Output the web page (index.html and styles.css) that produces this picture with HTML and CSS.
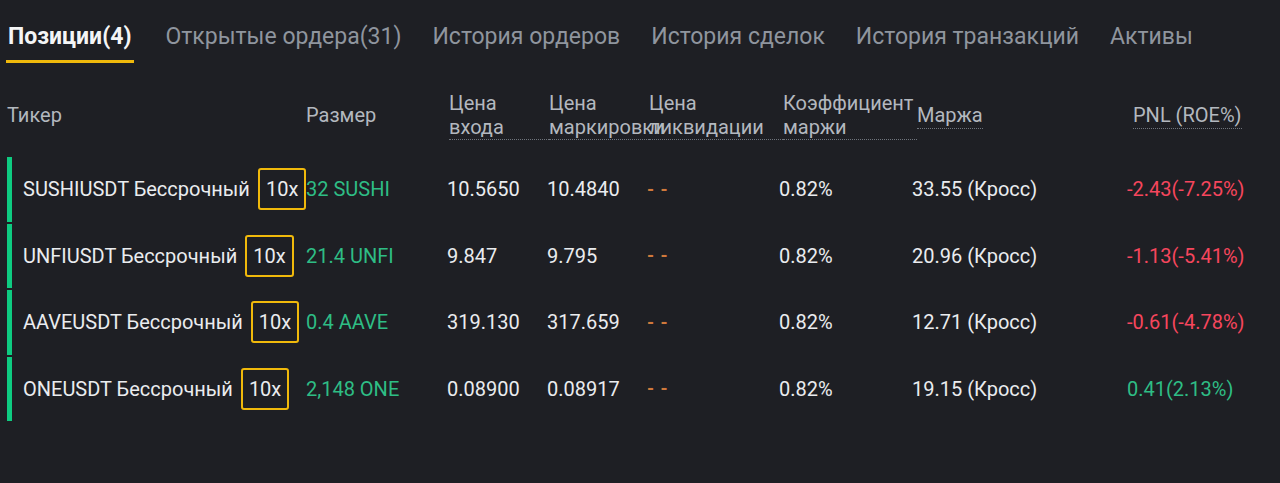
FILE: index.html
```html
<!DOCTYPE html>
<html lang="ru">
<head>
  <meta charset="UTF-8" />
  <title>Позиции</title>
  <link rel="stylesheet" href="styles.css">
</head>
<body>
  <div class="tabs">
    <div class="tab active">Позиции(4)</div>
    <div class="tab">Открытые ордера(31)</div>
    <div class="tab">История ордеров</div>
    <div class="tab">История сделок</div>
    <div class="tab">История транзакций</div>
    <div class="tab">Активы</div>
  </div>

  <div class="head">
    <div class="h">Тикер</div>
    <div class="h">Размер</div>
    <div class="h dotted">Цена<br>входа</div>
    <div class="h dotted">Цена<br>маркировки</div>
    <div class="h dotted">Цена<br>ликвидации</div>
    <div class="h dotted">Коэффициент<br>маржи</div>
    <div class="h"><span class="under">Маржа</span></div>
    <div class="h"><span class="under">PNL (ROE%)</span></div>
  </div>

  <div class="rows">
    <div class="row">
      <div class="ticker">SUSHIUSDT Бессрочный <span class="lev">10x</span></div>
      <div class="size">32 SUSHI</div>
      <div>10.5650</div>
      <div>10.4840</div>
      <div class="liq">- -</div>
      <div>0.82%</div>
      <div>33.55 (Кросс)</div>
      <div class="neg">-2.43(-7.25%)</div>
    </div>
    <div class="row">
      <div class="ticker">UNFIUSDT Бессрочный <span class="lev">10x</span></div>
      <div class="size">21.4 UNFI</div>
      <div>9.847</div>
      <div>9.795</div>
      <div class="liq">- -</div>
      <div>0.82%</div>
      <div>20.96 (Кросс)</div>
      <div class="neg">-1.13(-5.41%)</div>
    </div>
    <div class="row">
      <div class="ticker">AAVEUSDT Бессрочный <span class="lev">10x</span></div>
      <div class="size">0.4 AAVE</div>
      <div>319.130</div>
      <div>317.659</div>
      <div class="liq">- -</div>
      <div>0.82%</div>
      <div>12.71 (Кросс)</div>
      <div class="neg">-0.61(-4.78%)</div>
    </div>
    <div class="row">
      <div class="ticker">ONEUSDT Бессрочный <span class="lev">10x</span></div>
      <div class="size">2,148 ONE</div>
      <div>0.08900</div>
      <div>0.08917</div>
      <div class="liq">- -</div>
      <div>0.82%</div>
      <div>19.15 (Кросс)</div>
      <div class="pos">0.41(2.13%)</div>
    </div>
  </div>
</body>
</html>
```

FILE: styles.css
```css
body {
  margin: 0;
  padding: 0;
  background: #1e1f24;
  font-family: Roboto, "Noto Sans", sans-serif;
  color: #eaecef;
  height: 483px;
  overflow: hidden;
}
.tabs {
  display: flex;
  gap: 31px;
  padding: 22px 0 0 8px;
  height: 41px;
}
.tab {
  font-size: 23px;
  color: #8f959e;
  line-height: 30px;
  height: 38px;
}
.tab.active {
  color: #f4f5f6;
  font-weight: bold;
  border-bottom: 3px solid #f0b90b;
  margin-left: -2px;
  padding: 0 3px 0 2px;
}
.head {
  display: grid;
  grid-template-columns: 299px 143px 100px 100px 134px 134px 216px 1fr;
  align-items: center;
  padding: 27px 0 0 7px;
  height: 50px;
  font-size: 20px;
  color: #b3b8bf;
}
.h {
  white-space: nowrap;
  line-height: 24px;
}
.dotted {
  border-bottom: 1px dotted #6f747c;
}
.under {
  border-bottom: 1px dotted #6f747c;
  padding-bottom: 1px;
}
.rows {
  display: flex;
  flex-direction: column;
  gap: 2px;
  padding: 17px 0 0 7px;
}
.row {
  display: grid;
  grid-template-columns: 299px 141px 100px 100px 132px 133px 215px 1fr;
  align-items: center;
  height: 64.5px;
  font-size: 20px;
  color: #eaecef;
}
.ticker {
  border-left: 5px solid #0ecb81;
  height: 100%;
  padding-left: 11px;
  display: flex;
  align-items: center;
  white-space: nowrap;
}
.lev {
  display: inline-block;
  margin-left: 8px;
  border: 2px solid #f0b90b;
  border-radius: 3px;
  padding: 8px 6px;
  line-height: 22px;
}
.size {
  color: #2ebd85;
}
.liq {
  color: #d0793c;
  font-size: 18px;
  font-weight: bold;
  letter-spacing: 1px;
}
.neg {
  color: #f6465d;
}
.pos {
  color: #2ebd85;
}
```
